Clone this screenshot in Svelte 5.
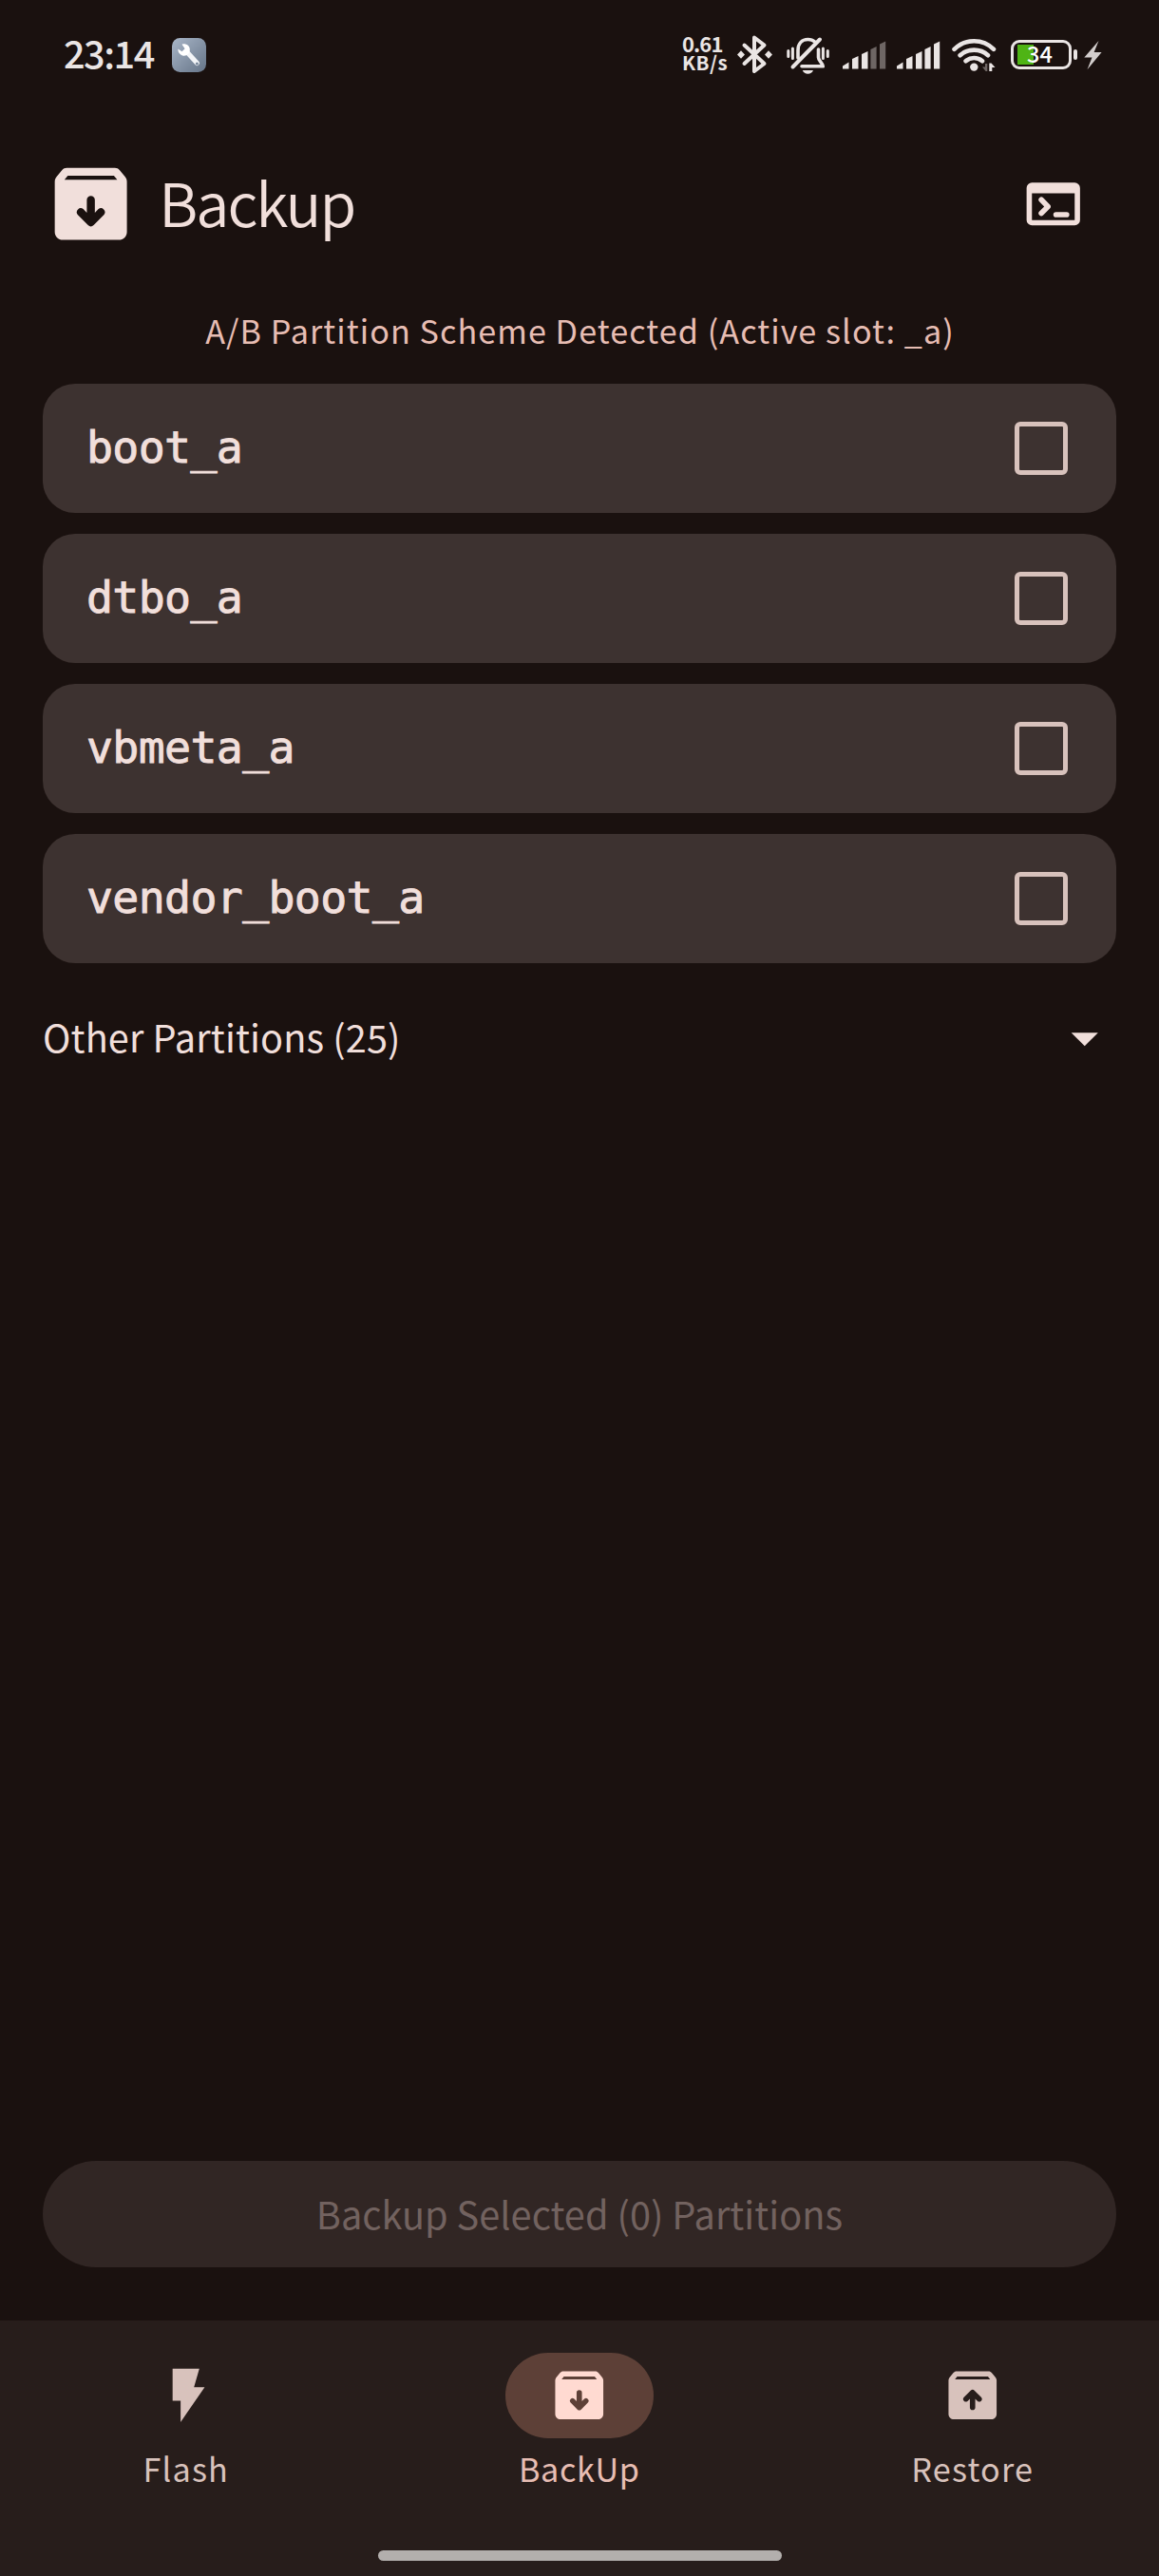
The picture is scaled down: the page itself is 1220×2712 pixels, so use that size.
<script>
  let partitions = $state([
    { name: 'boot_a', checked: false },
    { name: 'dtbo_a', checked: false },
    { name: 'vbmeta_a', checked: false },
    { name: 'vendor_boot_a', checked: false }
  ]);
  const selected = $derived(partitions.filter((p) => p.checked).length);

  const tabs = [
    { id: 'flash', label: 'Flash' },
    { id: 'backup', label: 'BackUp' },
    { id: 'restore', label: 'Restore' }
  ];
  let active = $state('backup');

  const box =
    'M20.54 5.23l-1.39-1.68C18.88 3.21 18.47 3 18 3H6c-.47 0-.88.21-1.16.55L3.46 5.23C3.17 5.57 3 6.02 3 6.5V19c0 1.1.9 2 2 2h14c1.1 0 2-.9 2-2V6.5c0-.48-.17-.93-.46-1.27zM6.24 5l-.82 1h13.17l-.83-1z';
  const downArrow =
    'M12 10a1 1 0 0 0-1 1v3.2l-.9-.9a1 1 0 0 0-1.4 1.4l2.6 2.6a1 1 0 0 0 1.4 0l2.6-2.6a1 1 0 0 0-1.4-1.4l-.9.9V11a1 1 0 0 0-1-1z';
  const upArrow =
    'M12 17.5a1 1 0 0 1-1-1v-3.2l-.9.9a1 1 0 0 1-1.4-1.4l2.6-2.6a1 1 0 0 1 1.4 0l2.6 2.6a1 1 0 0 1-1.4 1.4l-.9-.9v3.2a1 1 0 0 1-1 1z';
</script>

{#snippet signal(full)}
  <svg class="ic" width="57" height="44" viewBox="883 36 57 44">
    <path d="M887 72.5V69.5L893.5 65.5V72.5Z" />
    <path d="M897 72.5V62L903.5 59V72.5Z" />
    <path d="M907 72.5V57L913.5 54V72.5Z" />
    <path class:dim={!full} d="M916.4 72.5V52L922.6 49V72.5Z" />
    <path class:dim={!full} d="M926 72.5V46.5L932.2 43.5V72.5Z" />
  </svg>
{/snippet}

<div class="screen">
  <div class="status">
    <span class="time">23:14</span>
    <svg class="tool" width="36" height="36" viewBox="0 0 36 36">
      <defs>
        <linearGradient id="toolbg" x1="0" y1="0" x2="1" y2="1">
          <stop offset="0" stop-color="#a9b6c8" />
          <stop offset="1" stop-color="#657487" />
        </linearGradient>
      </defs>
      <rect width="36" height="36" rx="8.5" fill="url(#toolbg)" />
      <path d="M16 15L26.5 26.5" stroke="#f3f5f8" stroke-width="5" stroke-linecap="round" />
      <path d="M10.5 6.8C14 5.4 18.5 7.5 18.8 12C19 16.5 15 19.5 11.2 18.4C8 17.5 6 14.5 6.5 11.5L10.5 14.2L13.6 11.2Z" fill="#fff" />
      <circle cx="26.4" cy="27" r="1.5" fill="#77869a" />
    </svg>
    <div class="right">
      <div class="speed"><span class="num">0.61</span><span class="unit">KB/s</span></div>
      <svg class="ic" width="46" height="44" viewBox="774 36 46 44">
        <path class="st" stroke-width="4" stroke-linejoin="round" stroke-linecap="round" d="M783.5 47.5L804.5 67L794 75V39.5L804.5 47.5L783.5 67" />
        <path d="M780 53.2L784 57.5L780 61.8L776 57.5ZM809 53.2L813 57.5L809 61.8L805 57.5Z" />
      </svg>
      <svg class="ic" width="63" height="44" viewBox="820 36 63 44">
        <path class="st" stroke-width="3" stroke-linecap="round" d="M829.8 53.5V59.5M834.4 51V61.5M866.4 51V61.5M871.3 53.5V59.5" />
        <path class="st" stroke-width="3.6" stroke-linecap="round" stroke-linejoin="round" d="M840 61V53C840 46 844 41.5 850.5 41.5C853.5 41.5 856 42.5 857.7 44M861.5 52V60.5C861.5 64 866 66.5 866.3 69.8H844" />
        <path class="st" stroke-width="4" stroke-linecap="round" d="M834.5 70.5L863 41.5" />
        <path d="M844.8 74H856C855 76.6 853 77.8 850.4 77.8S845.8 76.6 844.8 74Z" />
      </svg>
      {@render signal(false)}
      {@render signal(true)}
      <svg class="ic wifi" width="56" height="44" viewBox="1000 36 56 44">
        <path class="st" stroke-width="4.6" stroke-linecap="round" d="M1004.5 51.8C1016 40.3 1034.6 40.3 1046 51.8" />
        <path class="st" stroke-width="4.6" stroke-linecap="round" d="M1010.6 58.2C1018.5 50.8 1032 50.8 1040 58.2" />
        <path class="st" stroke-width="4.6" stroke-linecap="round" d="M1016.6 64.2C1021.5 60 1029 60 1034 64.2" />
        <circle cx="1025.3" cy="70.6" r="4.2" />
        <path class="dim" d="M1039.3 67V75H1037.6L1034 70.5H1037V67Z" />
        <path d="M1041.3 75V66.5H1043.5L1047.5 71H1044.3V75Z" />
      </svg>
      <div class="battery">
        <div class="cell">34</div>
        <i class="nub"></i>
      </div>
      <svg class="ic" width="26" height="44" viewBox="1138 36 26 44">
        <path fill="#d3cecd" d="M1156.5 43L1141.3 60.5H1149.5L1144.5 73.2L1159.6 55H1151.6Z" />
      </svg>
    </div>
  </div>

  <header>
    <svg width="101.25" height="101.25" viewBox="0 0 24 24">
      <path fill="#f1dfdb" fill-rule="evenodd" d={box + downArrow} />
    </svg>
    <h1>Backup</h1>
    <svg class="term" width="67.5" height="67.5" viewBox="0 0 24 24">
      <path fill="#f1dfdb" fill-rule="evenodd" d="M4 4h16a2 2 0 0 1 2 2v12a2 2 0 0 1-2 2H4a2 2 0 0 1-2-2V6a2 2 0 0 1 2-2zM4 8v10h16V8z" />
      <path fill="none" stroke="#f1dfdb" stroke-width="2" stroke-linecap="round" stroke-linejoin="round" d="M7.5 10.4L10 13L7.5 15.5M13 16H17" />
    </svg>
  </header>

  <main>
    <p class="scheme">A/B Partition Scheme Detected (Active slot: _a)</p>
    <div class="list">
      {#each partitions as p}
        <label class="card">
          <span class="name">{p.name}</span>
          <input type="checkbox" bind:checked={p.checked} />
        </label>
      {/each}
    </div>
    <div class="other">
      <span>Other Partitions (25)</span>
      <svg width="67.5" height="67.5" viewBox="0 0 24 24"><path fill="#f1dfdb" d="M7 10l5 5 5-5z" /></svg>
    </div>
    <button class="go" disabled={selected === 0}>Backup Selected ({selected}) Partitions</button>
  </main>

  <nav>
    <div class="tabs">
      {#each tabs as t}
        <button class="tab" class:on={active === t.id} onclick={() => (active = t.id)}>
          <span class="pill">
            <svg width="67.5" height="67.5" viewBox="0 0 24 24">
              {#if t.id === 'flash'}
                <path d="M7 2v12h3v8l9-13h-4l2-7z" />
              {:else}
                <path fill-rule="evenodd" d={box + (t.id === 'backup' ? downArrow : upArrow)} />
              {/if}
            </svg>
          </span>
          <span class="label">{t.label}</span>
        </button>
      {/each}
    </div>
    <div class="handle"></div>
  </nav>
</div>

<style>
  :global(body) {
    background: #1a110f;
  }
  .screen {
    width: 1220px;
    height: 2712px;
    display: flex;
    flex-direction: column;
    background: #1a110f;
    color: #f1dfdb;
    font-family: 'Noto Sans CJK SC', 'Noto Sans', sans-serif;
    white-space: nowrap;
  }
  svg {
    display: block;
    flex: none;
  }
  .status {
    display: flex;
    align-items: flex-start;
    height: 80px;
    padding: 36px 56px 0 67px;
    box-sizing: border-box;
    color: #eae5e4;
  }
  .time {
    width: 114px;
    font-size: 39.7px;
    font-weight: 500;
    line-height: 38px;
    letter-spacing: -1.5px;
  }
  .tool {
    margin-top: 4px;
  }
  .right {
    display: flex;
    margin-left: auto;
  }
  .ic {
    fill: #eae5e4;
  }
  .st {
    fill: none;
    stroke: #eae5e4;
  }
  .dim {
    fill: #6e6664;
  }
  .wifi {
    margin-left: 3px;
  }
  .speed {
    display: flex;
    flex-direction: column;
    width: 56px;
    font-weight: 700;
  }
  .num {
    font-size: 22px;
    line-height: 19px;
    letter-spacing: -0.9px;
  }
  .unit {
    font-size: 20.5px;
    line-height: 21px;
    letter-spacing: 0.5px;
  }
  .battery {
    display: flex;
    align-items: center;
    width: 82px;
    height: 31px;
    margin-top: 6px;
    padding-left: 8px;
    box-sizing: border-box;
  }
  .cell {
    width: 64px;
    height: 31px;
    box-sizing: border-box;
    border: 3px solid #eae5e4;
    border-radius: 9px;
    padding-left: 14px;
    font-size: 23.5px;
    font-weight: 500;
    line-height: 23px;
    color: #fff;
    background: linear-gradient(#4fb415, #4fb415) 4px 2px / 17px 21px no-repeat;
  }
  .nub {
    width: 4px;
    height: 11px;
    margin-left: 2px;
    border-radius: 2px;
    background: #eae5e4;
  }
  header {
    display: flex;
    align-items: center;
    height: 101px;
    margin-top: 84px;
    padding: 0 77.5px 0 45px;
  }
  h1 {
    margin: -5px 0 0 21px;
    font-size: 63px;
    font-weight: 350;
    line-height: 80px;
    letter-spacing: -2px;
  }
  .term {
    margin-left: auto;
  }
  main {
    flex: 1;
    display: flex;
    flex-direction: column;
    padding: 62px 45px 56px;
  }
  .scheme {
    margin: 0;
    padding-left: 1px;
    text-align: center;
    font-size: 34.2px;
    line-height: 40px;
    letter-spacing: 1.05px;
    color: #e7bdb3;
  }
  .list {
    display: flex;
    flex-direction: column;
    gap: 22px;
    margin-top: 37px;
  }
  .card {
    display: flex;
    align-items: center;
    justify-content: space-between;
    height: 136px;
    padding: 0 51px 0 46px;
    box-sizing: border-box;
    border-radius: 34px;
    background: #3d3230;
  }
  .name {
    margin-bottom: 2px;
    font-family: 'DejaVu Sans Mono', monospace;
    font-size: 46.5px;
    line-height: 54px;
    letter-spacing: -0.64px;
    -webkit-text-stroke: 0.9px currentColor;
  }
  input {
    appearance: none;
    width: 56px;
    height: 56px;
    margin: 0;
    border: 5px solid #d8c2bc;
    border-radius: 6px;
  }
  input:checked {
    background: #e7bdb3;
  }
  .other {
    display: flex;
    align-items: center;
    justify-content: space-between;
    margin-top: 45px;
    height: 67.5px;
    font-size: 39.7px;
    letter-spacing: 0.12px;
  }
  .other span {
    line-height: 48px;
    margin-top: -3px;
  }
  .go {
    margin-top: auto;
    height: 112px;
    padding: 0 0 3px;
    border: 0;
    border-radius: 56px;
    background: #312624;
    color: #72625f;
    font: 400 39.7px/48px 'Noto Sans CJK SC', sans-serif;
    letter-spacing: 0.03px;
  }
  nav {
    height: 269px;
    background: #271d1b;
  }
  .tabs {
    display: grid;
    grid-template-columns: repeat(3, 391.5px);
    gap: 22.5px;
    height: 242px;
  }
  .tab {
    display: flex;
    flex-direction: column;
    align-items: center;
    padding: 34px 0 0;
    border: 0;
    background: none;
    color: #d8c2bc;
    font: 400 34.2px/40px 'Noto Sans CJK SC', sans-serif;
    letter-spacing: 1.2px;
  }
  .pill {
    display: flex;
    align-items: center;
    justify-content: center;
    width: 156px;
    height: 90px;
    border-radius: 45px;
    fill: #d8c2bc;
  }
  .label {
    margin-top: 10.5px;
  }
  .on {
    color: #e7bdb3;
    letter-spacing: 0.64px;
  }
  .on .pill {
    background: #5d4037;
    fill: #ffdad1;
  }
  .handle {
    width: 425px;
    height: 11px;
    margin: 0 auto;
    border-radius: 6px;
    background: #b3afad;
  }
</style>
